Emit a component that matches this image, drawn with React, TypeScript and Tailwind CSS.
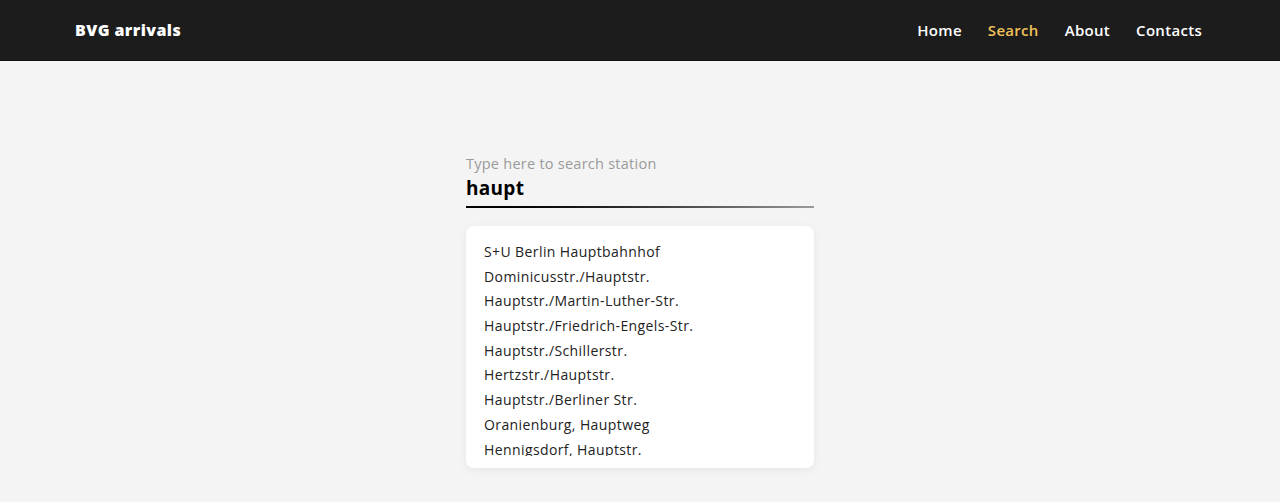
import React from "react";

const stations = [
  "S+U Berlin Hauptbahnhof",
  "Dominicusstr./Hauptstr.",
  "Hauptstr./Martin-Luther-Str.",
  "Hauptstr./Friedrich-Engels-Str.",
  "Hauptstr./Schillerstr.",
  "Hertzstr./Hauptstr.",
  "Hauptstr./Berliner Str.",
  "Oranienburg, Hauptweg",
  "Hennigsdorf, Hauptstr.",
];

export default function App() {
  return (
    <div className="min-h-[502px] bg-[#f4f4f4] font-['Open_Sans',sans-serif]">
      <header className="h-[61px] bg-[#1c1c1c] border-b border-[#111111] flex items-center justify-between pl-[75px] pr-[78px]">
        <div className="text-white font-extrabold text-[16px] tracking-[0.4px]">BVG arrivals</div>
        <nav className="flex items-center gap-[26px] text-[15px] font-semibold tracking-[0.3px]">
          <a className="text-white">Home</a>
          <a className="text-[#f2c15a]">Search</a>
          <a className="text-white">About</a>
          <a className="text-white">Contacts</a>
        </nav>
      </header>
      <main className="flex justify-center pt-[93px]">
        <div className="w-[348px]">
          <div className="text-[14.5px] text-[#9a9a9a] leading-[20px] tracking-[0.25px]">Type here to search station</div>
          <div className="text-[19px] font-bold text-black leading-[28px] tracking-[0.3px]">haupt</div>
          <div className="h-[2px] mt-[4px] bg-gradient-to-r from-black via-[#333333] to-[#9a9a9a]" />
          <div className="mt-[18px] bg-white rounded-[8px] shadow-[0_2px_10px_rgba(0,0,0,0.06)] pt-[14px] pb-[12px] px-[18px]">
            <ul className="h-[216px] overflow-hidden text-[14px] text-[#222222] tracking-[0.4px]">
              {stations.map((s) => (
                <li key={s} className="h-[24.7px] leading-[24.7px] whitespace-nowrap">{s}</li>
              ))}
            </ul>
          </div>
        </div>
      </main>
    </div>
  );
}
